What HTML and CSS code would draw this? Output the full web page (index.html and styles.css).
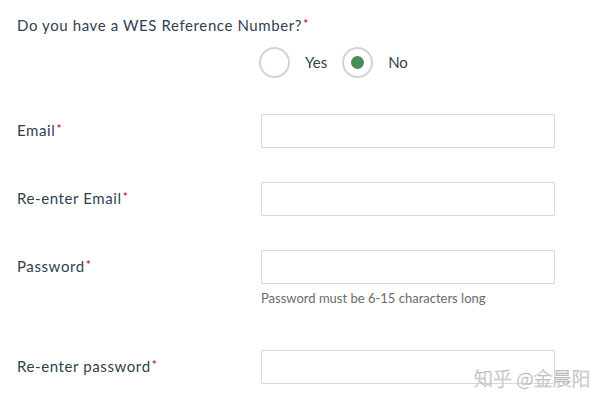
FILE: index.html
```html
<!DOCTYPE html>
<html>
<head>
<meta charset="utf-8">
<link rel="stylesheet" href="styles.css">
</head>
<body>
<div class="form">
  <div class="question">Do you have a WES Reference Number?<span class="req">*</span></div>
  <div class="radios">
    <span class="radio"></span><span class="opt">Yes</span>
    <span class="radio checked"><span class="dot"></span></span><span class="opt">No</span>
  </div>
  <div class="field first">
    <div class="label">Email<span class="req">*</span></div>
    <div class="control"><div class="input"></div></div>
  </div>
  <div class="field">
    <div class="label">Re-enter Email<span class="req">*</span></div>
    <div class="control"><div class="input"></div></div>
  </div>
  <div class="field">
    <div class="label">Password<span class="req">*</span></div>
    <div class="control"><div class="input"></div><div class="help">Password must be 6-15 characters long</div></div>
  </div>
  <div class="field last">
    <div class="label">Re-enter password<span class="req">*</span></div>
    <div class="control"><div class="input"></div></div>
  </div>
</div>
<div class="watermark">知乎 @金晨阳</div>
</body>
</html>
```
FILE: styles.css
```css
html, body {
  margin: 0;
  padding: 0;
  background: #fff;
}
body {
  font-family: Lato, "Noto Sans", sans-serif;
  color: #2f3f52;
  width: 607px;
  height: 402px;
  overflow: hidden;
  position: relative;
}
.form {
  padding: 14px 0 0 17px;
}
.question {
  font-size: 15px;
  line-height: 22px;
  letter-spacing: 0.6px;
}
.req {
  color: #c9302c;
  font-size: 12px;
  font-weight: 700;
  vertical-align: 3px;
  line-height: 1;
  margin-left: 1px;
}
.radios {
  display: flex;
  align-items: center;
  margin-left: 242px;
  margin-top: 11px;
  height: 30px;
}
.radio {
  width: 31px;
  height: 31px;
  box-sizing: border-box;
  border: 2px solid #d4d4d4;
  border-radius: 50%;
  display: flex;
  align-items: center;
  justify-content: center;
}
.dot {
  width: 13px;
  height: 13px;
  border-radius: 50%;
  background: #4a8c59;
}
.opt {
  font-size: 15px;
  margin: 0 15px 0 15px;
}
.field {
  display: flex;
  margin-top: 34px;
}
.field.first {
  margin-top: 37px;
}
.field.last {
  margin-top: 44px;
}
.label {
  width: 244px;
  font-size: 15px;
  letter-spacing: 0.6px;
  line-height: 22px;
  padding-top: 5px;
}
.input {
  width: 294px;
  height: 34px;
  box-sizing: border-box;
  border: 1.5px solid #d8d8d8;
  border-radius: 1px;
  background: #fff;
}
.help {
  font-size: 13px;
  color: #6b6b6b;
  margin-top: 6px;
  line-height: 16px;
}
.watermark {
  position: absolute;
  left: 474px;
  top: 364px;
  font-family: "Noto Sans CJK SC", sans-serif;
  font-size: 19px;
  font-weight: 300;
  color: rgba(255,255,255,0.85);
  -webkit-text-stroke: 0.5px #b0b0b0;
}
```
